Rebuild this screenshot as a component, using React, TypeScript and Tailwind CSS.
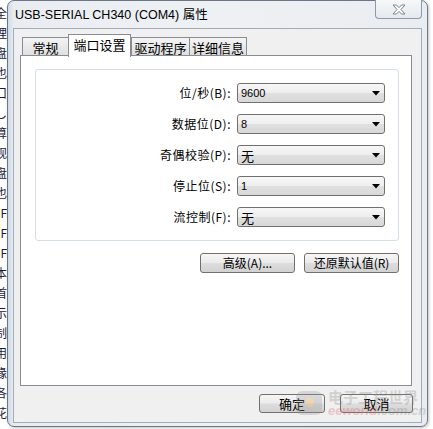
import { ReactNode } from "react";

const bgChars = ["全", "理", "盘", "也", "口", "し", "算", "观", "盘", "也", "F", "F", "F", "本", "首", "示", "制", "用", "缘", "各", "花"];

const rows = [
    { label: "位/秒(B):", value: "9600", latin: true },
    { label: "数据位(D):", value: "8", latin: true },
    { label: "奇偶校验(P):", value: "无", latin: false },
    { label: "停止位(S):", value: "1", latin: true },
    { label: "流控制(F):", value: "无", latin: false },
];

const btn =
    "flex items-center justify-center rounded-[3px] border border-[#707070] bg-[linear-gradient(to_bottom,#f6f6f6_0%,#ebebeb_48%,#dddddd_52%,#d2d2d2_100%)] text-[12px] leading-none text-black";

function Combo({ value, latin }: { value: string; latin: boolean }) {
    return (
        <div className="flex h-[20px] w-[148px] items-center justify-between rounded-[3px] border border-[#707070] bg-[linear-gradient(to_bottom,#f7f7f7_0%,#eeeeee_48%,#e0e0e0_52%,#d8d8d8_100%)] pl-[3px] pr-[4px]">
            <span className={latin ? "font-['Liberation_Sans',sans-serif] text-[11px] leading-none" : "text-[13px] leading-none"}>{value}</span>
            <svg width="8" height="5" viewBox="0 0 8 5">
                <path d="M0 0 H8 L4 4.5 Z" fill="#000" />
            </svg>
        </div>
    );
}

function Tab({ children, w, active }: { children: ReactNode; w: string; active?: boolean }) {
    if (active) {
        return (
            <div className={`${w} relative z-10 -mb-[1px] flex h-[23px] items-start justify-center border border-b-0 border-[#898c95] bg-white pt-[3px] text-[13px] leading-none`}>
                {children}
            </div>
        );
    }
    return (
        <div className={`${w} -mr-[1px] mt-[3px] flex h-[19px] items-center justify-center border border-b-0 border-[#898c95] bg-[linear-gradient(to_bottom,#f4f4f4,#dedede)] pt-[1px] text-[13px] leading-none`}>
            {children}
        </div>
    );
}

export default function App() {
    return (
        <div className="relative flex h-[429px] w-[433px] overflow-hidden bg-white font-['Noto_Sans_CJK_SC',sans-serif] text-black">
            {/* background window peeking on the left */}
            <div className="flex w-[7px] flex-col items-end overflow-hidden pt-[3px]">
                {bgChars.map((c, i) => (
                    <div key={i} className="h-[20px] text-[12px] leading-[20px] text-[#1c1c3a] whitespace-nowrap">
                        {c}
                    </div>
                ))}
            </div>

            {/* dialog window */}
            <div className="flex h-[427px] w-[421px] flex-col rounded-[7px] border border-[#6b7785] bg-[linear-gradient(to_right,#cfdbe8_0px,#e9edf1_6px,#eef1f4_50%,#e9edf1_100%)] px-[5px] pb-[3px] shadow-[1px_1px_3px_rgba(0,0,0,0.25)]">
                <div className="flex h-[27px] shrink-0 items-start justify-between">
                    <div className="pl-[2px] pt-[6px] font-['Liberation_Sans','Noto_Sans_CJK_SC',sans-serif] text-[12.5px] leading-[16px] text-black">
                        USB-SERIAL CH340 (COM4) 属性
                    </div>
                    <div className="-mt-[1px] flex h-[19px] w-[47px] items-center justify-center rounded-b-[4px] border border-t-0 border-[#8e9aa7] bg-[linear-gradient(to_bottom,#f6f8fa,#e4e9ee)]">
                        <svg width="14" height="11" viewBox="0 0 14 11">
                            <path
                                d="M1 1 H4.5 L7 3.6 L9.5 1 H13 L9 5.5 L13 10 H9.5 L7 7.4 L4.5 10 H1 L5 5.5 Z"
                                fill="#fbfbfb"
                                stroke="#7b8590"
                                strokeWidth="1"
                                strokeLinejoin="round"
                            />
                        </svg>
                    </div>
                </div>

                {/* client area */}
                <div className="flex flex-1 flex-col border border-[#a4adb7] bg-[#f0f0f0] pl-[6px] pt-[5px]">
                    <div className="flex h-[21px] pl-[2px]">
                        <Tab w="w-[47px]">常规</Tab>
                        <Tab w="w-[63px]" active>端口设置</Tab>
                        <Tab w="w-[59px]">驱动程序</Tab>
                        <Tab w="w-[58px]">详细信息</Tab>
                    </div>

                    <div className="flex h-[331px] w-[392px] flex-col border border-[#898c95] bg-white">
                        <div className="ml-[14px] mt-[13px] flex w-[364px] flex-col gap-[11px] rounded-[3px] border border-[#d5dfe5] py-[13px] pr-[13px]">
                            {rows.map((r) => (
                                <div key={r.label} className="flex h-[20px] items-center justify-end gap-[6px]">
                                    <span className="text-[12px] leading-none tracking-[0.5px]">{r.label}</span>
                                    <Combo value={r.value} latin={r.latin} />
                                </div>
                            ))}
                        </div>
                        <div className="mr-[12px] mt-[12px] flex justify-end gap-[9px]">
                            <div className={`${btn} h-[20px] w-[95px]`}>高级(A)...</div>
                            <div className={`${btn} h-[20px] w-[95px]`}>还原默认值(R)</div>
                        </div>
                    </div>

                    <div className="mr-[8px] mt-[8px] flex justify-end gap-[15px]">
                        <div className={`${btn} h-[19px] w-[66px] text-[13px]`}>确定</div>
                        <div className={`${btn} h-[19px] w-[73px] text-[13px]`}>取消</div>
                    </div>
                </div>
            </div>

            {/* site watermark */}
            <div className="pointer-events-none absolute left-[296px] top-[388px] flex items-center gap-[6px] whitespace-nowrap opacity-30">
                <div className="flex h-[24px] w-[26px] items-center justify-center rounded-[6px] bg-[#9a9a9a]">
                    <div className="h-[9px] w-[9px] rounded-full bg-[#f0a030]" />
                </div>
                <div className="flex flex-col">
                    <span className="text-[15px] font-bold leading-[17px] text-[#8a8a8a]">电子工程世界</span>
                    <span className="font-['Liberation_Sans',sans-serif] text-[13px] font-bold italic leading-[12px] text-[#e06060]">
                        ee<span className="text-[#e06060]">world</span><span className="text-[#8a8a8a]">.com.cn</span>
                    </span>
                </div>
            </div>
        </div>
    );
}
